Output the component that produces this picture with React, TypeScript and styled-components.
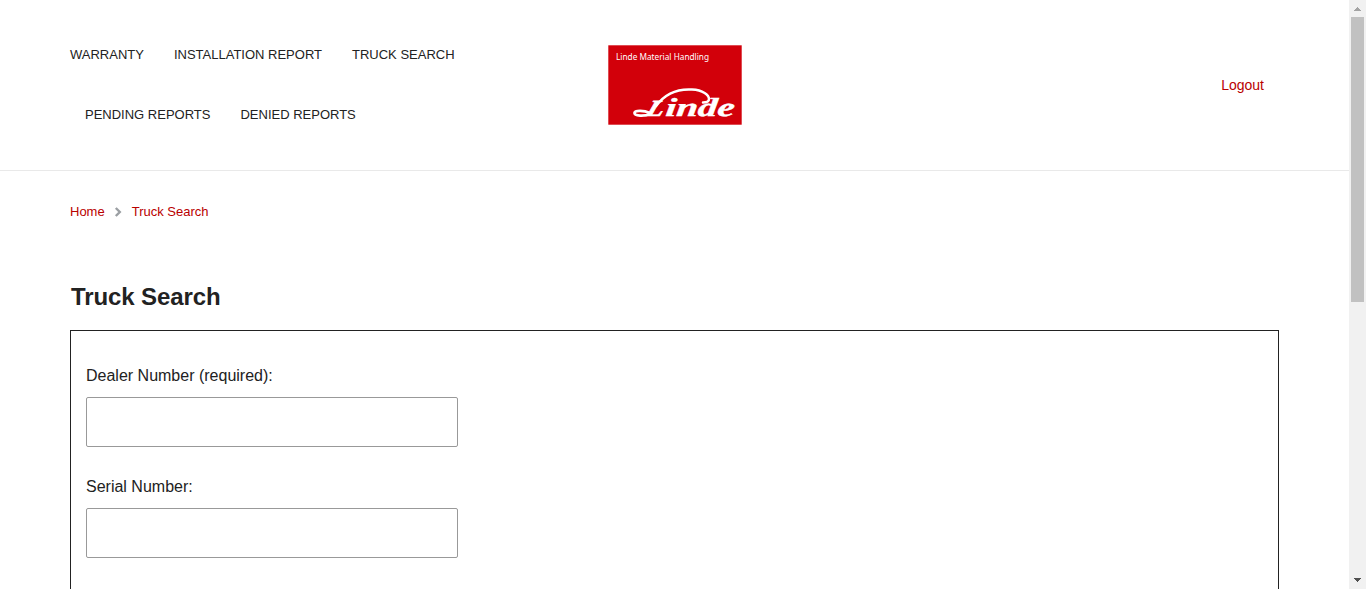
import React from "react";
import styled, { createGlobalStyle } from "styled-components";

const GlobalStyle = createGlobalStyle`
  * { box-sizing: border-box; }
  body {
    margin: 0;
    overflow: hidden;
    background: #fff;
    color: #222;
    font-family: "Liberation Sans", Arial, sans-serif;
    font-size: 16px;
  }
`;

const Window = styled.div`
  display: flex;
  height: 589px;
  overflow: hidden;
`;

const Page = styled.div`
  flex: 1;
  min-width: 0;
  height: 100%;
  overflow: hidden;
`;

const Header = styled.header`
  display: grid;
  grid-template-columns: 403px 403px 403px;
  height: 171px;
  padding: 0 70px;
  border-bottom: 1px solid #e9e9e9;
`;

const Nav = styled.nav`
  display: flex;
  flex-wrap: wrap;
  align-content: flex-start;
  padding-top: 25px;
`;

const NavLink = styled.a<{ $first?: boolean }>`
  padding: 0 15px 0 ${(p) => (p.$first ? 0 : 15)}px;
  font-size: 13px;
  line-height: 60px;
  color: #222;
  white-space: nowrap;
`;

const LogoCell = styled.div`
  padding: 45px 0 0 135px;
`;

const LogoSvg = styled.svg`
  display: block;
`;

const Account = styled.div`
  padding-right: 15px;
  text-align: right;
  line-height: 169px;
`;

const RedLink = styled.a<{ $size: number }>`
  font-size: ${(p) => p.$size}px;
  color: #b90000;
`;

const Breadcrumbs = styled.div`
  display: flex;
  align-items: center;
  height: 20px;
  margin: 30px 70px 0;
`;

const Chevron = styled.svg`
  display: block;
  margin: 2px 10px 0 9px;
`;

const Title = styled.h1`
  margin: 62px 0 0 71px;
  font-size: 24px;
  line-height: 28px;
  font-weight: 700;
  letter-spacing: -0.1px;
`;

const Form = styled.form`
  width: 1209px;
  height: 500px;
  margin: 19px 0 0 70px;
  padding: 33px 15px;
  border: 1px solid #222;
`;

const Field = styled.label`
  display: block;
  height: 111px;
  line-height: 24px;
`;

const Input = styled.input`
  display: block;
  width: 372px;
  height: 50px;
  margin-top: 9px;
  padding: 0 12px;
  border: 1px solid #999;
  border-radius: 2px;
  background: #fff;
  font: inherit;
`;

const Scrollbar = styled.div`
  display: flex;
  flex-direction: column;
  align-items: center;
  width: 17px;
  height: 100%;
  background: #f1f1f1;
`;

const ArrowButton = styled.svg`
  display: block;
  flex: none;
`;

const Track = styled.div`
  flex: 1;
`;

const Thumb = styled.div`
  width: 13px;
  height: 285px;
  background: #c1c1c1;
`;

function Logo() {
  return (
    <LogoSvg width="134" height="80" viewBox="0 0 134 80">
      <rect x="0.3" y="0.3" width="133.4" height="79.4" fill="#d2000a" />
      <text x="8" y="15" fill="#fff" fontSize="9.6" fontFamily="'Noto Sans', sans-serif" textLength="93" lengthAdjust="spacingAndGlyphs">
        Linde Material Handling
      </text>
      <g fill="#fff" stroke="#fff" fontFamily="'Liberation Serif', serif" fontWeight="700" fontStyle="italic">
        <text transform="translate(37 71) skewX(-20)" x="0" y="0" fontSize="23" strokeWidth="0.7" textLength="17" lengthAdjust="spacingAndGlyphs">L</text>
        <text transform="translate(57 71) skewX(-6)" x="0" y="0" fontSize="26" strokeWidth="0.4" textLength="69" lengthAdjust="spacingAndGlyphs">inde</text>
      </g>
      <g fill="none" stroke="#fff" strokeLinecap="round">
        <path d="M48 61C56 50 68 43.5 84 44.5C95 45 101 50 101 54C101 56.5 99 57.5 95 57.5" strokeWidth="2.5" />
        <path d="M42 68C36 65.5 27 65 26.5 68C26.5 71 36 71.5 42 69" strokeWidth="2.8" />
      </g>
    </LogoSvg>
  );
}

export default function App() {
  return (
    <>
      <GlobalStyle />
      <Window>
        <Page>
          <Header>
            <Nav>
              <NavLink $first>WARRANTY</NavLink>
              <NavLink>INSTALLATION REPORT</NavLink>
              <NavLink>TRUCK SEARCH</NavLink>
              <NavLink>PENDING REPORTS</NavLink>
              <NavLink>DENIED REPORTS</NavLink>
            </Nav>
            <LogoCell>
              <Logo />
            </LogoCell>
            <Account>
              <RedLink $size={14}>Logout</RedLink>
            </Account>
          </Header>
          <Breadcrumbs>
            <RedLink $size={13}>Home</RedLink>
            <Chevron width="8" height="10" viewBox="0 0 8 10">
              <path d="M1.8 1L5.8 5L1.8 9" fill="none" stroke="#9b9fa3" strokeWidth="2.4" />
            </Chevron>
            <RedLink $size={13}>Truck Search</RedLink>
          </Breadcrumbs>
          <Title>Truck Search</Title>
          <Form>
            <Field>
              Dealer Number (required):
              <Input />
            </Field>
            <Field>
              Serial Number:
              <Input />
            </Field>
          </Form>
        </Page>
        <Scrollbar>
          <ArrowButton width="17" height="17" viewBox="0 0 17 17" shapeRendering="crispEdges">
            <path d="M8 7h1v1h1v1h1v1h1v1H5v-1h1V9h1V8h1z" fill="#a3a3a3" />
          </ArrowButton>
          <Track>
            <Thumb />
          </Track>
          <ArrowButton width="17" height="17" viewBox="0 0 17 17" shapeRendering="crispEdges">
            <path d="M5 6h7v1h-1v1h-1v1H9v1H8V9H7V8H6V7H5z" fill="#505050" />
          </ArrowButton>
        </Scrollbar>
      </Window>
    </>
  );
}
